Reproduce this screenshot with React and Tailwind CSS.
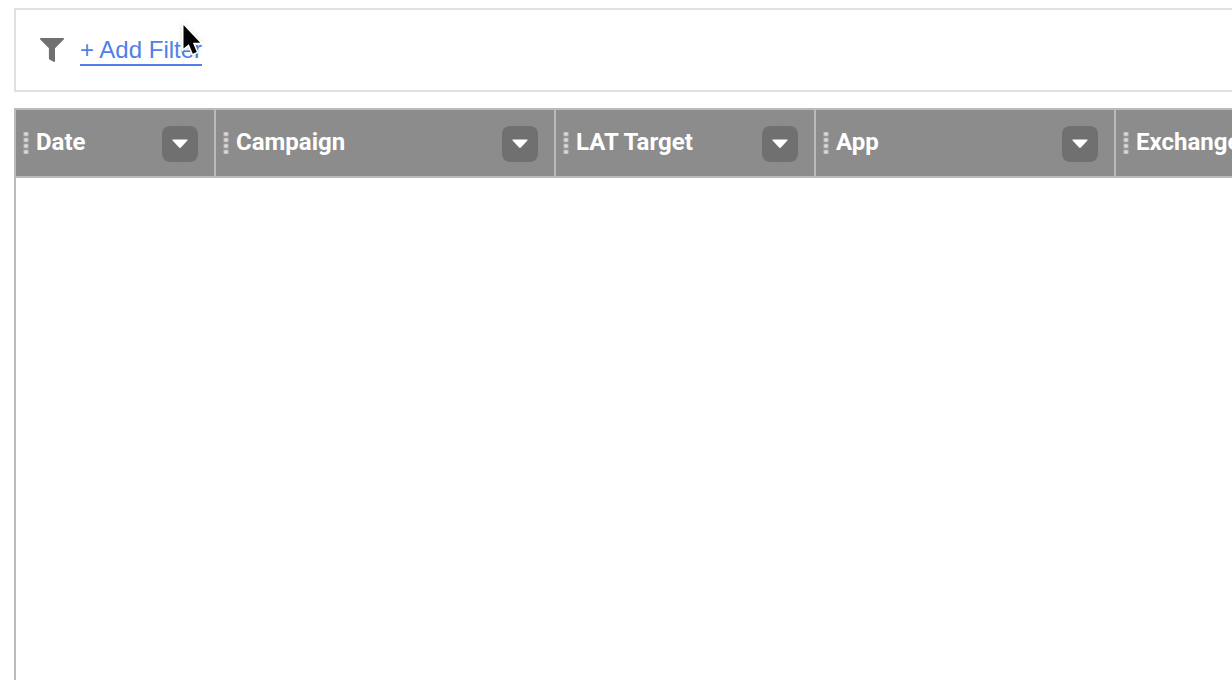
const columns = [
  { name: 'Date', width: 'w-[200px]' },
  { name: 'Campaign', width: 'w-[340px]' },
  { name: 'LAT Target', width: 'w-[260px]' },
  { name: 'App', width: 'w-[300px]' },
  { name: 'Exchange', width: 'w-[260px]' },
];

function FunnelIcon() {
  return (
    <svg className="block h-6 w-6 shrink-0" viewBox="0 0 24 24" aria-hidden="true">
      <path
        d="M.6 0h22.8c.5 0 .8.6.5 1.3L15 10.200V23c0 .9-.8 1.200-1.500.8L9.400 21.400c-.3-.2-.5-.5-.5-.9V10.200L.1 1.300C-.2.600.100 0 .600 0z"
        fill="#707070"
      />
    </svg>
  );
}

function DragHandle() {
  return (
    <svg className="block h-[22px] w-1.5 shrink-0" viewBox="0 0 6 22" aria-hidden="true">
      <rect x="0.500" width="5" height="22" fill="#989898" />
      {[0, 6, 12, 18].map((y) => (
        <g key={y}>
          <rect x="0.500" y={y} width="5" height="4" fill="#b4b4b4" />
          <rect x="1.500" y={y + 0.5} width="3" height="3" fill="#dedede" />
        </g>
      ))}
    </svg>
  );
}

function PointerIcon() {
  return (
    <svg
      className="pointer-events-none absolute left-[180px] top-[20px] h-10 w-7 drop-shadow-sm"
      viewBox="0 0 28 40"
      aria-hidden="true"
    >
      <path
        d="M3.500 5V28.500L8.800 24.200L12.800 33.700L16.800 32L12.900 22.800H20.200Z"
        fill="#000"
        stroke="#fff"
        strokeWidth="3"
        paintOrder="stroke"
      />
    </svg>
  );
}

function HeaderCell({ name }) {
  return (
    <th
      scope="col"
      className="h-[66px] border-2 border-[#bbbbbb] bg-[#8c8c8c] p-0 pl-[7px] pr-4 text-left align-middle"
    >
      <div className="flex items-center">
        <DragHandle />
        <span className="ml-[7px] flex-1 whitespace-nowrap pb-0.5">{name}</span>
        <button
          type="button"
          aria-label={`${name} options`}
          className="mt-0.5 flex h-9 w-9 shrink-0 items-center justify-center rounded-lg bg-[#707070]"
        >
          <svg className="block h-2.5 w-4" viewBox="0 0 16 10" aria-hidden="true">
            <path d="M1 .5h14c.6 0 .8.600.4 1L8.900 8.600c-.5.6-1.300.6-1.800 0L.6 1.500C.2 1.100.400.500 1 .500z" fill="#fff" />
          </svg>
        </button>
      </div>
    </th>
  );
}

export default function App() {
  return (
    <div className="relative flex h-screen flex-col overflow-hidden bg-white pl-3.5 pt-2">
      <section
        aria-label="Filters"
        className="flex h-[84px] shrink-0 items-center gap-4 border-2 border-r-0 border-[#e0e0e0] pl-6"
      >
        <FunnelIcon />
        <a
          href="#add-filter"
          className="mt-0.5 border-b-2 border-[#5080e8] font-['Liberation_Sans',Arial,sans-serif] text-2xl leading-7 text-[#5080e8]"
        >
          + Add Filter
        </a>
      </section>

      <div className="mt-4 min-h-0 flex-1 overflow-hidden">
        <table className="h-full w-[1360px] table-fixed border-separate border-spacing-0 font-['Roboto',sans-serif] text-2xl font-bold text-white [&_th+th]:border-l-0">
          <colgroup>
            <col className="w-[202px]" />
            {columns.slice(1).map((c) => (
              <col key={c.name} className={c.width} />
            ))}
          </colgroup>
          <thead>
            <tr className="h-[70px]">
              {columns.map((c) => (
                <HeaderCell key={c.name} name={c.name} />
              ))}
            </tr>
          </thead>
          <tbody>
            <tr>
              <td colSpan={columns.length} className="border-l-2 border-[#bbbbbb]" />
            </tr>
          </tbody>
        </table>
      </div>
      <PointerIcon />
    </div>
  );
}
